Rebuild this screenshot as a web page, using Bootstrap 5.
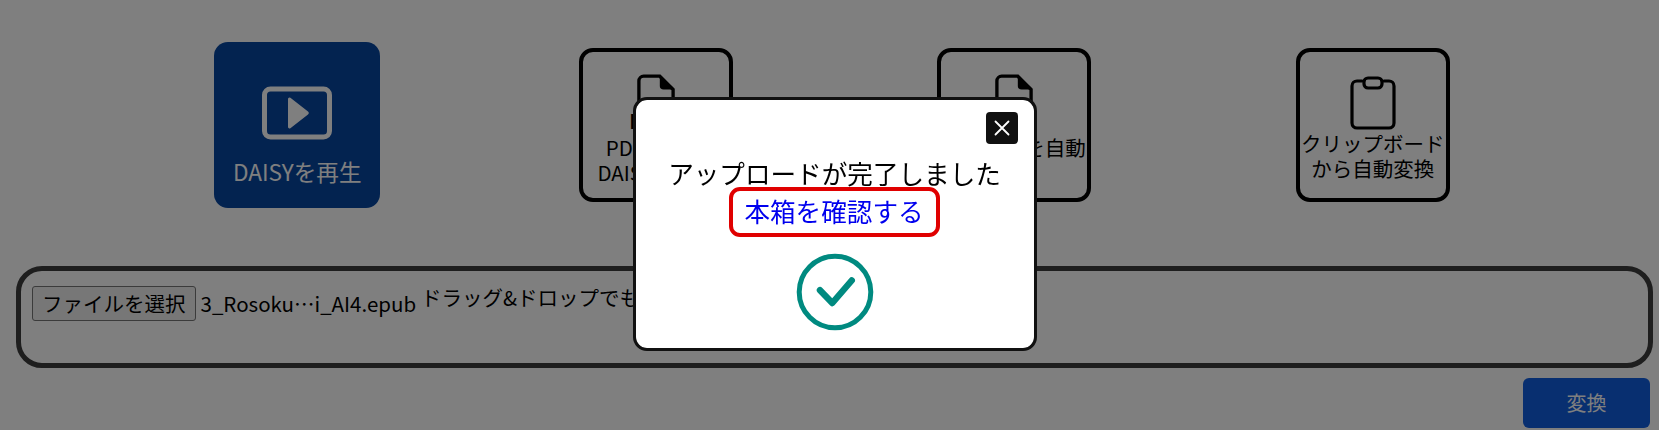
<!DOCTYPE html>
<html lang="ja">
<head>
  <meta charset="UTF-8" />
  <meta name="viewport" content="width=device-width, initial-scale=1.0" />
  <title>DAISY変換</title>
  <link href="https://cdn.jsdelivr.net/npm/bootstrap@5.3.3/dist/css/bootstrap.min.css" rel="stylesheet">
  <style>
    html, body { height: 430px; overflow: hidden; }
    body { background: #fff; color: #000; font-family: "Noto Sans CJK JP", "Noto Sans", sans-serif; }
    .tile-row { padding: 42px 107px 0 118px; height: 208px; }
    .tile-cell { width: 25%; }
    .mode-tile { width: 154px; height: 154px; border: 4px solid #000; border-radius: 14px; background: #fff; color: #000; font-size: 20.5px; line-height: 25px; padding: 0; }
    .mode-tile.active { width: 166px; height: 166px; background: #0646a0; border: 0; color: #fff; font-size: 22.6px; line-height: 27px; }
    .mode-tile svg { display: block; }
    .play-icon { margin-top: 44px; }
    .play-label { margin-top: 18px; }
    .doc-wrap { margin-top: 22px; }
    .doc-tag { top: 35px; left: 50%; transform: translateX(-50%); font-size: 20px; line-height: 24px; font-weight: 700; letter-spacing: 4.5px; }
    .doc-label { margin-top: 11px; }
    .clip-icon { margin-top: 24px; }
    .clip-label { margin-top: 1px; }
    .drop-box { margin: 58px 6px 0 16px; height: 102px; border: 5px solid #3c3c3c; border-radius: 26px; padding: 15px 11px; font-size: 20.5px; line-height: 1.2; }
    .file-btn { background: #efefef; border: 1px solid #767676; border-radius: 3px; color: #000; font-size: 20.5px; padding: 0 9px; height: 35px; line-height: 33px; }
    .file-name { margin-left: 5px; margin-right: 5px; }
    .drop-hint { position: relative; top: -6px; }
    .run-row { margin: 10px 9px 0 0; }
    .run-btn { width: 127px; height: 50px; background: #105ee0; color: #fff; border: 0; border-radius: 6px; font-size: 20px; padding: 0; }
    .run-btn:hover { background: #105ee0; color: #fff; }
    .shade { --bs-backdrop-opacity: .5; }
    .done-dialog { width: 404px; max-width: 404px; margin: 97px 0 0 633px; }
    .done-box { height: 254px; border: 3px solid #111; border-radius: 14px; padding: 12px 16px 0 15px; text-align: center; box-shadow: none; }
    .done-close { width: 32px; height: 32px; background: #111; border: 0; border-radius: 4px; padding: 0; }
    .done-title { font-size: 25.6px; line-height: 38px; margin-top: 10px; color: #000; }
    .done-link { border: 4.5px solid #e00000; border-radius: 11px; color: #0000ee; font-size: 25.6px; line-height: 40px; padding: 0 12px 0 11px; height: 50px; text-decoration: none; margin-top: -5px; }
    .done-mark { display: block; margin: 16px auto 0; }
  </style>
</head>
<body>
  <div class="tile-row d-flex align-items-center">
    <div class="tile-cell d-flex justify-content-center">
      <button class="mode-tile active d-flex flex-column align-items-center justify-content-start">
        <svg class="play-icon" width="72" height="54" viewBox="0 0 72 54" fill="none">
          <rect x="3.500" y="3" width="65" height="48" rx="6" stroke="#fff" stroke-width="5"/>
          <path d="M27 13v28a1.500 1.500 0 0 0 2.400 1.200L47 28.500a1.800 1.800 0 0 0 0-3L29.400 11.800A1.500 1.500 0 0 0 27 13z" fill="#fff"/>
        </svg>
        <span class="play-label">DAISYを再生</span>
      </button>
    </div>
    <div class="tile-cell d-flex justify-content-center">
      <button class="mode-tile d-flex flex-column align-items-center justify-content-start">
        <span class="doc-wrap position-relative">
          <svg width="38" height="50" viewBox="0 0 40 52" fill="none">
            <path d="M7 2h17l14 14v29a5 5 0 0 1-5 5H7a5 5 0 0 1-5-5V7a5 5 0 0 1 5-5z" stroke="#000" stroke-width="3.500"/>
            <path d="M24 2l14 14H28a4 4 0 0 1-4-4z" fill="#000"/>
          </svg>
          <span class="doc-tag position-absolute">PDF</span>
        </span>
        <span class="doc-label text-nowrap">PDFを自動<br>DAISYに変換</span>
      </button>
    </div>
    <div class="tile-cell d-flex justify-content-center">
      <button class="mode-tile d-flex flex-column align-items-center justify-content-start">
        <span class="doc-wrap">
          <svg width="38" height="50" viewBox="0 0 40 52" fill="none">
            <path d="M7 2h17l14 14v29a5 5 0 0 1-5 5H7a5 5 0 0 1-5-5V7a5 5 0 0 1 5-5z" stroke="#000" stroke-width="3.500"/>
            <path d="M24 2l14 14H28a4 4 0 0 1-4-4z" fill="#000"/>
          </svg>
        </span>
        <span class="doc-label text-nowrap">テキストを自動<br>変換</span>
      </button>
    </div>
    <div class="tile-cell d-flex justify-content-center">
      <button class="mode-tile d-flex flex-column align-items-center justify-content-start">
        <svg class="clip-icon" width="46" height="54" viewBox="0 0 46 54" fill="none">
          <path d="M12 5H7a5 5 0 0 0-5 5v37a5 5 0 0 0 5 5h32a5 5 0 0 0 5-5V10a5 5 0 0 0-5-5h-5" stroke="#000" stroke-width="3.200" stroke-linecap="round"/>
          <rect x="14" y="2" width="18" height="10" rx="4" stroke="#000" stroke-width="3.200"/>
        </svg>
        <span class="clip-label text-nowrap">クリップボード<br>から自動変換</span>
      </button>
    </div>
  </div>

  <div class="drop-box">
    <button class="file-btn">ファイルを選択</button><span class="file-name">3_Rosoku…i_AI4.epub</span><span class="drop-hint">ドラッグ&amp;ドロップでもアップロードできます</span>
  </div>
  <div class="run-row d-flex justify-content-end">
    <button class="btn run-btn">変換</button>
  </div>

  <div class="modal-backdrop show shade"></div>
  <div class="modal d-block" tabindex="-1">
    <div class="modal-dialog done-dialog">
      <div class="modal-content done-box">
        <div class="d-flex justify-content-end">
          <button class="done-close d-flex align-items-center justify-content-center" aria-label="閉じる">
            <svg width="16" height="16" viewBox="0 0 16 16"><path d="M1.500 1.500l13 13M14.500 1.500l-13 13" stroke="#fff" stroke-width="1.800" stroke-linecap="round"/></svg>
          </button>
        </div>
        <div class="done-title">アップロードが完了しました</div>
        <div class="d-flex justify-content-center"><a class="done-link" href="#">本箱を確認する</a></div>
        <svg class="done-mark" width="78" height="78" viewBox="0 0 78 78" fill="none">
          <circle cx="39" cy="39" r="35.800" stroke="#008a80" stroke-width="5"/>
          <path d="M24 37.200L36.300 50L55.700 27.500" stroke="#008a80" stroke-width="6.500" stroke-linecap="round" stroke-linejoin="round"/>
        </svg>
      </div>
    </div>
  </div>
  <script src="https://cdn.jsdelivr.net/npm/bootstrap@5.3.3/dist/js/bootstrap.bundle.min.js"></script>
</body>
</html>
